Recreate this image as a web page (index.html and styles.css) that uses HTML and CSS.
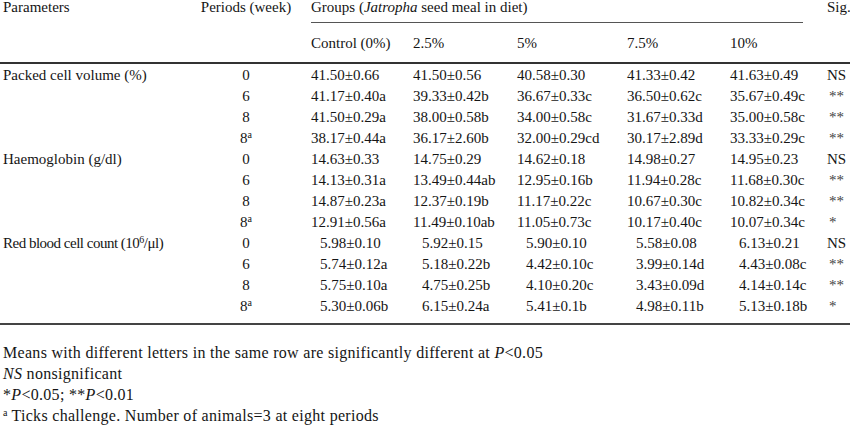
FILE: index.html
```html
<!DOCTYPE html>
<html>
<head>
<meta charset="utf-8">
<link rel="stylesheet" href="styles.css">
</head>
<body>
<table class="tbl">
  <colgroup>
    <col class="c1"><col class="c2"><col class="c3"><col class="c4"><col class="c5"><col class="c6"><col class="c7"><col class="c8">
  </colgroup>
  <thead>
    <tr class="h1">
      <th class="param" rowspan="2">Parameters</th>
      <th class="per" rowspan="2">Periods (week)</th>
      <th class="grp" colspan="5"><div class="grp-line">Groups (<i>Jatropha</i> seed meal in diet)</div></th>
      <th class="sig" rowspan="2">Sig.</th>
    </tr>
    <tr class="h2">
      <th>Control (0%)</th><th>2.5%</th><th>5%</th><th>7.5%</th><th>10%</th>
    </tr>
  </thead>
  <tbody>
    <tr><td class="param">Packed cell volume (%)</td><td class="per">0</td><td>41.50±0.66</td><td>41.50±0.56</td><td>40.58±0.30</td><td>41.33±0.42</td><td>41.63±0.49</td><td>NS</td></tr>
    <tr><td></td><td class="per">6</td><td>41.17±0.40a</td><td>39.33±0.42b</td><td>36.67±0.33c</td><td>36.50±0.62c</td><td>35.67±0.49c</td><td class="st">**</td></tr>
    <tr><td></td><td class="per">8</td><td>41.50±0.29a</td><td>38.00±0.58b</td><td>34.00±0.58c</td><td>31.67±0.33d</td><td>35.00±0.58c</td><td class="st">**</td></tr>
    <tr><td></td><td class="per">8<sup>a</sup></td><td>38.17±0.44a</td><td>36.17±2.60b</td><td>32.00±0.29cd</td><td>30.17±2.89d</td><td>33.33±0.29c</td><td class="st">**</td></tr>
    <tr><td class="param">Haemoglobin (g/dl)</td><td class="per">0</td><td>14.63±0.33</td><td>14.75±0.29</td><td>14.62±0.18</td><td>14.98±0.27</td><td>14.95±0.23</td><td>NS</td></tr>
    <tr><td></td><td class="per">6</td><td>14.13±0.31a</td><td>13.49±0.44ab</td><td>12.95±0.16b</td><td>11.94±0.28c</td><td>11.68±0.30c</td><td class="st">**</td></tr>
    <tr><td></td><td class="per">8</td><td>14.87±0.23a</td><td>12.37±0.19b</td><td>11.17±0.22c</td><td>10.67±0.30c</td><td>10.82±0.34c</td><td class="st">**</td></tr>
    <tr><td></td><td class="per">8<sup>a</sup></td><td>12.91±0.56a</td><td>11.49±0.10ab</td><td>11.05±0.73c</td><td>10.17±0.40c</td><td>10.07±0.34c</td><td class="st">*</td></tr>
    <tr class="small"><td class="param tight">Red blood cell count (10<sup>6</sup>/μl)</td><td class="per">0</td><td>5.98±0.10</td><td>5.92±0.15</td><td>5.90±0.10</td><td>5.58±0.08</td><td>6.13±0.21</td><td>NS</td></tr>
    <tr class="small"><td></td><td class="per">6</td><td>5.74±0.12a</td><td>5.18±0.22b</td><td>4.42±0.10c</td><td>3.99±0.14d</td><td>4.43±0.08c</td><td class="st">**</td></tr>
    <tr class="small"><td></td><td class="per">8</td><td>5.75±0.10a</td><td>4.75±0.25b</td><td>4.10±0.20c</td><td>3.43±0.09d</td><td>4.14±0.14c</td><td class="st">**</td></tr>
    <tr class="small last"><td></td><td class="per">8<sup>a</sup></td><td>5.30±0.06b</td><td>6.15±0.24a</td><td>5.41±0.1b</td><td>4.98±0.11b</td><td>5.13±0.18b</td><td class="st">*</td></tr>
  </tbody>
</table>
<div class="notes">
  <p>Means with different letters in the same row are significantly different at <i>P</i>&lt;0.05</p>
  <p><i>NS</i> nonsignificant</p>
  <p>*<i>P</i>&lt;0.05; **<i>P</i>&lt;0.01</p>
  <p><sup>a</sup> Ticks challenge. Number of animals=3 at eight periods</p>
</div>
</body>
</html>
```

FILE: styles.css
```css
html, body {
  margin: 0;
  padding: 0;
  background: #ffffff;
}
body {
  font-family: "Liberation Serif", "Times New Roman", serif;
  font-size: 15px;
  color: #151515;
  width: 850px;
  height: 426px;
  overflow: hidden;
}
.tbl {
  border-collapse: collapse;
  table-layout: fixed;
  width: 850px;
}
.c1 { width: 196px; }
.c2 { width: 115px; }
.c3 { width: 102px; }
.c4 { width: 104px; }
.c5 { width: 110px; }
.c6 { width: 103px; }
.c7 { width: 97px; }
.c8 { width: 23px; }
th, td {
  padding: 0;
  text-align: left;
  font-weight: normal;
  white-space: nowrap;
  line-height: 21px;
  vertical-align: middle;
}
.param { padding-left: 3px; }
.tight { letter-spacing: -0.5px; }
.per { text-align: center; padding-right: 15px; }
.h1 th { vertical-align: top; height: 24px; line-height: 15px; }
.grp-line {
  border-bottom: 1.5px solid #555;
  margin-right: 24px;
  height: 22px;
}
.h2 th { height: 38px; }
thead { border-bottom: 2.5px solid #333; }
tbody tr:first-child td { padding-top: 1px; }
.small td:nth-child(n+3):nth-child(-n+7) { padding-left: 9px; }
.st { padding-left: 2px; color: #444; }
.last td { padding-bottom: 6px; }
tbody { border-bottom: 2px solid #444; }
sup {
  font-size: 10px;
  vertical-align: 5px;
  line-height: 0;
}
.notes { padding: 17px 0 0 3px; font-size: 16px; letter-spacing: 0.3px; }
.notes p { margin: 0; line-height: 21px; }
.notes sup { font-size: 10px; letter-spacing: 0; }
```
